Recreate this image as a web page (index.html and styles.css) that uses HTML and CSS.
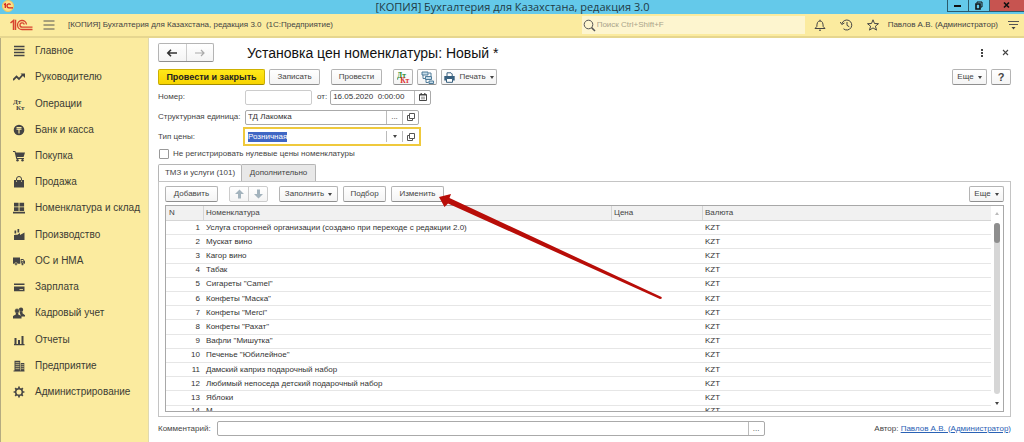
FILE: index.html
```html
<!DOCTYPE html>
<html lang="ru">
<head>
  <meta charset="UTF-8">
  <meta name="viewport" content="width=device-width, initial-scale=1.0">
  <title>[КОПИЯ] Бухгалтерия для Казахстана, редакция 3.0</title>
  <link rel="stylesheet" href="styles.css">
</head>
<body>

<div class="window">
  <div class="titlebar">
    <svg class="app-icon" width="12" height="12" viewBox="0 0 12 12">
      <circle cx="6" cy="6" r="5.5" fill="#fbe08a" stroke="#f3c95b"/>
      <path d="M2 4.6l1.3-.8V8M8.6 4.6a2 2 0 1 0-1.6 3.2h4" fill="none" stroke="#d5251d" stroke-width="1.3"/>
    </svg>
    <span class="window-title">[КОПИЯ] Бухгалтерия для Казахстана, редакция 3.0</span>
    <div class="window-buttons">
      <button aria-label="Свернуть"><svg width="9" height="9" viewBox="0 0 9 9"><path d="M1 5h7" stroke="#111" stroke-width="2"/></svg></button>
      <button aria-label="Развернуть"><svg width="9" height="9" viewBox="0 0 9 9"><path d="M3 2V1h5v5H7" fill="none" stroke="#111"/><path d="M2 3h4v5H2z" fill="none" stroke="#111" stroke-width="1.6"/></svg></button>
      <button class="close" aria-label="Закрыть"><svg width="9" height="9" viewBox="0 0 9 9"><path d="M2 1.5l5 5M7 1.5l-5 5" stroke="#111" stroke-width="1.7"/></svg></button>
    </div>
  </div>

  <header class="appbar">
    <svg class="logo" width="23" height="12" viewBox="0 0 23 12" fill="none" stroke="#d8442f">
      <path d="M.5 4L3.500 1.500V11M5.500 11V.8" stroke-width="1.500"/>
      <path d="M16.500 5.500a4.500 4.500 0 1 0-4.500 5h10.500" stroke-width="1.300"/>
      <path d="M14.300 5.500a2.200 2.200 0 1 0-2.200 2.700h10.400" stroke-width="1.300"/>
    </svg>
    <button class="icon-btn menu" aria-label="Меню"><svg width="12" height="10" viewBox="0 0 12 10"><path d="M.5 1h11M.5 5h11M.5 9h11" stroke="#555" stroke-width="1"/></svg></button>
    <span class="app-name">[КОПИЯ] Бухгалтерия для Казахстана, редакция 3.0&nbsp; (1С:Предприятие)</span>
    <label class="search">
      <svg width="13" height="13" viewBox="0 0 13 13" fill="none" stroke="#555"><circle cx="5.500" cy="5.500" r="4.300"/><path d="M8.600 8.600L12 12" stroke-width="1.500"/></svg>
      <input type="search" placeholder="Поиск Ctrl+Shift+F" aria-label="Поиск">
    </label>
    <div class="appbar-icons">
      <button class="icon-btn" aria-label="Уведомления"><svg width="12" height="12" viewBox="0 0 12 12" fill="none" stroke="#444"><path d="M1 9.500h10L9.200 7.500C9 4 8.500 2 6 2S3 4 2.800 7.500zM6 2V.7M5 11.200h2"/></svg></button>
      <button class="icon-btn" aria-label="История"><svg width="13" height="12" viewBox="0 0 13 12" fill="none" stroke="#444"><path d="M2 4.500A5 5 0 1 1 3.500 9.800M7 3v3.300l2.300 1.500"/><path d="M.3 3l1.500 2.500L4.400 4"/></svg></button>
      <button class="icon-btn" aria-label="Избранное"><svg width="12" height="12" viewBox="0 0 12 12" fill="none" stroke="#444"><path d="M6 .8l1.500 3.700 4 .2-3.100 2.500 1.100 3.900L6 8.900l-3.500 2.200 1.100-3.900L.5 4.700l4-.2z"/></svg></button>
    </div>
    <span class="user">Павлов А.В. (Администратор)</span>
    <button class="icon-btn" aria-label="Настройки"><svg width="11" height="10" viewBox="0 0 11 10"><path d="M0 1.500h11M1 4.500h9" stroke="#555"/><path d="M3.500 7h4l-2 2.500z" fill="#444"/></svg></button>
  </header>

  <div class="body">
    <nav class="sidebar">
      <a href="#"><svg width="12" height="12" viewBox="0 0 12 12"><path d="M1 1.500h10.500M1 4.500h10.500M1 7.500h10.500M1 10.500h10.500" stroke="#444" stroke-width="1.400"/></svg>Главное</a>
      <a href="#"><svg width="12" height="12" viewBox="0 0 12 12"><path d="M0 9l3.500-3.500L6 8l4-4.500" fill="none" stroke="#444" stroke-width="1.800"/><path d="M7.500 2.500H12V7z" fill="#444"/></svg>Руководителю</a>
      <a href="#"><svg class="dtkt" width="12" height="12" viewBox="0 0 12 12"><text x="0" y="6">Дт</text><text x="3" y="12">Кт</text></svg>Операции</a>
      <a href="#"><svg width="12" height="12" viewBox="0 0 12 12"><circle cx="6" cy="6" r="5.300" fill="#444"/><path d="M3.500 3.600h5M3.500 5.300h5M6 5.300V9.500" stroke="#fbeb9f" stroke-width="1.100"/></svg>Банк и касса</a>
      <a href="#"><svg width="12" height="12" viewBox="0 0 12 12"><path d="M0 1h2.300l.5 1.500H12L10.600 7H4l.3 1H11v1H3.300L1.600 2H0z" fill="#444"/><circle cx="4.500" cy="10.300" r="1.200" fill="#444"/><circle cx="9.500" cy="10.300" r="1.200" fill="#444"/></svg>Покупка</a>
      <a href="#"><svg width="12" height="12" viewBox="0 0 12 12"><path d="M1 4h10v7.500H1z" fill="#444"/><path d="M3.500 6V3a2.500 2.500 0 0 1 5 0v3" fill="none" stroke="#444"/><path d="M3.500 4.500v1.500M8.500 4.500v1.500" stroke="#fbeb9f" stroke-width=".7"/></svg>Продажа</a>
      <a href="#"><svg width="12" height="12" viewBox="0 0 12 12"><path d="M1 .8h4.600v3.700H1zM6.500.8h4.600v3.700H6.500zM1 5.300h4.600V9H1zM6.500 5.300h4.600V9H6.500zM0 9.800h12v1.700H0z" fill="#444"/></svg>Номенклатура и склад</a>
      <a href="#"><svg width="12" height="12" viewBox="0 0 12 12"><path d="M1 11V6h1l1-.5L4 6l3-2v2l4.500-2.500V11zM1.500 1.500h1.700v3H1.500zM4.500 0h1.700v3.500H4.500z" fill="#444"/></svg>Производство</a>
      <a href="#"><svg width="12" height="12" viewBox="0 0 12 12"><path d="M0 2.500h7v6.300H0zM7.600 4h2.600L12 6.200v2.600H7.600z" fill="#444"/><path d="M8.500 4.900h1.400l1 1.400H8.500z" fill="#fbeb9f"/><circle cx="3" cy="9" r="1.400" fill="#444" stroke="#fbeb9f" stroke-width=".5"/><circle cx="9.500" cy="9" r="1.400" fill="#444" stroke="#fbeb9f" stroke-width=".5"/></svg>ОС и НМА</a>
      <a href="#"><svg width="12" height="12" viewBox="0 0 12 12"><path d="M1 2.500h10.500V4H1zM1 5.500h10.500v4.700H1z" fill="#444"/><path d="M6.500 8.500h3.500" stroke="#fbeb9f" stroke-width=".8"/></svg>Зарплата</a>
      <a href="#"><svg width="12" height="12" viewBox="0 0 12 12" fill="#444"><circle cx="8" cy="2.800" r="2.200"/><path d="M6.500 5h3v1.300l2.500 2V9.500H8z"/><circle cx="4" cy="4" r="2.400" stroke="#fbeb9f" stroke-width=".4"/><path d="M2.800 6h2.500v1.400L8.500 9v2.500H0V9l2.800-1.600z"/></svg>Кадровый учет</a>
      <a href="#"><svg width="12" height="12" viewBox="0 0 12 12" fill="#444"><path d="M1 10h10.500v1.300H1zM1.500 4h2v6h-2zM5 6h2v4H5zM8.500 2h2v8h-2z"/></svg>Отчеты</a>
      <a href="#"><svg width="12" height="12" viewBox="0 0 12 12"><path d="M1.500.8h5.700V11H1.500zM7.800 3h3.500v8H7.800zM.5 10.500h11v1H.5z" fill="#444"/><path d="M2.500 2.700h4M2.500 4.700h4M2.500 6.700h4M2.500 8.700h4M8.300 4.700h2.500M8.300 6.700h2.500M8.300 8.700h2.500" stroke="#fbeb9f" stroke-width=".7"/></svg>Предприятие</a>
      <a href="#"><svg width="12" height="12" viewBox="0 0 12 12" fill="none" stroke="#444"><circle cx="6" cy="6" r="3.300" stroke-width="1.500"/><path d="M6 .6v2M6 9.400v2M.6 6h2M9.400 6h2M2.200 2.200l1.400 1.400M8.400 8.400l1.400 1.400M9.800 2.200L8.400 3.600M3.600 8.400L2.200 9.800" stroke-width="1.700"/></svg>Администрирование</a>
    </nav>

    <main class="content">
      <div class="row heading">
        <div class="btn-pair nav">
          <button aria-label="Назад"><svg width="12" height="10" viewBox="0 0 12 10"><path d="M11 5H2.500M5 1.800L1.800 5 5 8.200" fill="none" stroke="#333" stroke-width="1.600"/></svg></button>
          <button aria-label="Вперед"><svg width="12" height="10" viewBox="0 0 12 10"><path d="M1 5h9M7 2l3 3-3 3" fill="none" stroke="#aaa" stroke-width="1.200"/></svg></button>
        </div>
        <h1>Установка цен номенклатуры: Новый *</h1>
        <div class="heading-tools">
          <button class="icon-btn" aria-label="Действия"><svg width="4" height="8" viewBox="0 0 4 8" fill="#444"><path d="M1 0h2v2H1zM1 3h2v2H1zM1 6h2v2H1z"/></svg></button>
          <button class="icon-btn" aria-label="Закрыть"><svg width="7" height="7" viewBox="0 0 7 7"><path d="M1 1l5 5M6 1L1 6" stroke="#444" stroke-width="1.100"/></svg></button>
        </div>
      </div>

      <div class="row toolbar">
        <button class="btn primary">Провести и закрыть</button>
        <button class="btn w-record">Записать</button>
        <button class="btn w-record gap">Провести</button>
        <button class="btn square gap" aria-label="Проводки"><svg class="dtkt color" width="13" height="13" viewBox="0 0 12 12"><text x="0" y="6">Дт</text><text x="3" y="11">Кт</text></svg></button>
        <button class="btn square" aria-label="Структура"><svg width="13" height="13" viewBox="0 0 13 13" fill="#c5dbe8" stroke="#3f7191" stroke-width=".9"><path d="M1 1h6v3H1zM4.500 5.500h6v3h-6zM8 10h4.500v2.500H8z"/><path d="M2 4v3.500h2M5 8.500v3h2.500M7.500 2H10v3" fill="none"/></svg></button>
        <button class="btn print"><svg width="11" height="11" viewBox="0 0 11 11"><path d="M3 4V.8h4l1.200 1.200V4" fill="#fff" stroke="#38607f"/><path d="M.3 4h10.400v4.500H.3z" fill="#38607f"/><path d="M2.500 6.500h6v3.800h-6z" fill="#fff" stroke="#38607f"/></svg>Печать<i class="caret"></i></button>
        <button class="btn more push">Еще<i class="caret"></i></button>
        <button class="btn square help">?</button>
      </div>

      <div class="row field">
        <label for="number">Номер:</label>
        <input class="box number" type="text" id="number">
        <label class="from" for="date">от:</label>
        <div class="box date">
          <input type="text" id="date" value="16.05.2020  0:00:00">
          <button aria-label="Календарь"><svg width="8" height="8" viewBox="0 0 8 8"><path d="M.5 1.500h7v6h-7z" fill="none" stroke="#444"/><path d="M.5 2h7M2.200 0v2M5.800 0v2" stroke="#444" stroke-width="1.200"/><path d="M2 4.200h4M2 5.800h4" stroke="#777" stroke-width=".8"/></svg></button>
        </div>
      </div>
      <div class="row field">
        <label for="unit">Структурная единица:</label>
        <div class="box ref">
          <input type="text" id="unit" value="ТД Лакомка">
          <button aria-label="Выбрать">...</button>
          <button aria-label="Открыть"><svg width="8" height="8" viewBox="0 0 8 8" fill="none" stroke="#555"><path d="M2.500.5h5v5h-5z"/><path d="M2.500 2.500h-2v5h5v-2"/></svg></button>
        </div>
      </div>
      <div class="row field price">
        <label for="price-type">Тип цены:</label>
        <div class="box ref active">
          <input type="text" id="price-type" role="combobox" value="Розничная">
          <button aria-label="Список"><i class="caret"></i></button>
          <button aria-label="Открыть"><svg width="8" height="8" viewBox="0 0 8 8" fill="none" stroke="#555"><path d="M2.500.5h5v5h-5z"/><path d="M2.500 2.500h-2v5h5v-2"/></svg></button>
        </div>
      </div>
      <label class="row check"><input type="checkbox">Не регистрировать нулевые цены номенклатуры</label>

      <div class="tabs" role="tablist">
        <button class="tab selected" role="tab" aria-selected="true">ТМЗ и услуги (101)</button>
        <button class="tab" role="tab" aria-selected="false">Дополнительно</button>
      </div>

      <section class="panel">
        <div class="row panel-tools">
          <button class="btn w-add">Добавить</button>
          <div class="btn-pair move gap">
            <button aria-label="Вверх"><svg width="9" height="10" viewBox="0 0 9 10"><path d="M4.500.5L9 5H6v4.500H3V5H0z" fill="#a3b3bd"/></svg></button>
            <button aria-label="Вниз"><svg width="9" height="10" viewBox="0 0 9 10"><path d="M4.500 9.500L0 5h3V.5h3V5h3z" fill="#a3b3bd"/></svg></button>
          </div>
          <button class="btn w-fill gap">Заполнить<i class="caret"></i></button>
          <button class="btn w-pick">Подбор</button>
          <button class="btn w-add">Изменить</button>
          <button class="btn more push">Еще<i class="caret"></i></button>
        </div>
        <div class="grid">
          <div class="grid-view">
            <table>
              <thead>
                <tr><th class="col-n">N</th><th>Номенклатура</th><th class="col-price">Цена</th><th class="col-currency">Валюта</th></tr>
              </thead>
              <tbody>
                <tr><td>1</td><td>Услуга сторонней организации (создано при переходе с редакции 2.0)</td><td></td><td>KZT</td></tr>
                <tr><td>2</td><td>Мускат вино</td><td></td><td>KZT</td></tr>
                <tr><td>3</td><td>Кагор вино</td><td></td><td>KZT</td></tr>
                <tr><td>4</td><td>Табак</td><td></td><td>KZT</td></tr>
                <tr><td>5</td><td>Сигареты "Camel"</td><td></td><td>KZT</td></tr>
                <tr><td>6</td><td>Конфеты "Маска"</td><td></td><td>KZT</td></tr>
                <tr><td>7</td><td>Конфеты "Merci"</td><td></td><td>KZT</td></tr>
                <tr><td>8</td><td>Конфеты "Рахат"</td><td></td><td>KZT</td></tr>
                <tr><td>9</td><td>Вафли "Мишутка"</td><td></td><td>KZT</td></tr>
                <tr><td>10</td><td>Печенье "Юбилейное"</td><td></td><td>KZT</td></tr>
                <tr><td>11</td><td>Дамский каприз подарочный набор</td><td></td><td>KZT</td></tr>
                <tr><td>12</td><td>Любимый непоседа детский подарочный набор</td><td></td><td>KZT</td></tr>
                <tr><td>13</td><td>Яблоки</td><td></td><td>KZT</td></tr>
                <tr class="last"><td>14</td><td>М...</td><td></td><td>KZT</td></tr>
              </tbody>
            </table>
          </div>
          <div class="scrollbar">
            <i class="caret up"></i>
            <div class="track"><div class="thumb"></div></div>
            <i class="caret"></i>
          </div>
        </div>
      </section>

      <footer class="row footer">
        <label for="comment">Комментарий:</label>
        <div class="box comment">
          <input type="text" id="comment">
          <button aria-label="Открыть комментарий">...</button>
        </div>
        <span class="author">Автор: <a href="#">Павлов А.В. (Администратор)</a></span>
      </footer>
    </main>
  </div>

  <svg class="pointer" width="226" height="108" viewBox="0 0 226 108"><path d="M1 3L13 0l-1.500 4L223.500 103q1 2-1.500 2L10 9.500 6.500 13z" fill="#b80d08"/></svg>
</div>

<script>
  document.getElementById('price-type').select();
</script>
</body>
</html>
```
FILE: styles.css
```css
* {
  box-sizing: border-box;
}

body {
  margin: 0;
  font-family: "Liberation Sans", Arial, sans-serif;
  font-size: 8px;
  line-height: 10px;
  color: #444;
  background: #fff;
}

button,
input {
  font: inherit;
  color: inherit;
  margin: 0;
  padding: 0;
  border: none;
  background: none;
}

input {
  outline: none;
  min-width: 0;
}

svg {
  display: block;
  flex: none;
}

.window {
  position: relative;
  display: flex;
  flex-direction: column;
  height: 100vh;
  overflow: hidden;
}

/* window frame */
.titlebar {
  display: flex;
  justify-content: space-between;
  height: 14px;
  padding-left: 2px;
  background: #64c9ea;
}

.window-title {
  font-family: "Open Sans", sans-serif;
  font-size: 11px;
  line-height: 13px;
  color: #1f3a45;
  margin-left: 64px;
}

.window-buttons {
  display: flex;
  height: 12px;
}

.window-buttons button {
  width: 21px;
  display: flex;
  align-items: center;
  justify-content: center;
  border: 1px solid #2b5b6c;
  border-top: none;
  border-right: none;
}

.window-buttons .close {
  width: 35px;
  background: #c75450;
}

.appbar {
  display: flex;
  align-items: center;
  height: 24px;
  padding: 0 5px 0 10px;
  background: #fbeb9f;
  border-bottom: 2px solid #e6d68f;
}

.icon-btn {
  display: flex;
}

.menu {
  margin: 0 13px 0 10px;
}

.app-name {
  flex: 1;
}

.search {
  display: flex;
  align-items: center;
  gap: 1px;
  width: 223px;
  height: 18px;
  padding-left: 1px;
  background: #fdf5cf;
}

.search input {
  flex: 1;
}

.search input::placeholder {
  color: #aaa48a;
  opacity: 1;
}

.appbar-icons {
  display: flex;
  gap: 14px;
  margin: 0 9px;
}

.user {
  margin-right: 10px;
}

.body {
  display: flex;
  flex: 1;
  min-height: 0;
}

.sidebar {
  display: flex;
  flex-direction: column;
  width: 149px;
  flex: none;
  padding-bottom: 37px;
  background: #fbeb9f;
  border-left: 1px solid #b5ab80;
  border-right: 1px solid #e0d9b0;
}

.sidebar a {
  flex: 1;
  display: flex;
  align-items: center;
  gap: 10px;
  padding-left: 12px;
  font-size: 10px;
  color: #3c3c34;
  text-decoration: none;
}

.dtkt text {
  font-family: "Liberation Serif", serif;
  font-size: 7px;
  font-weight: bold;
  fill: #444;
}

.dtkt.color text {
  fill: #2c8a2c;
}

.dtkt.color text + text {
  fill: #d33;
}

/* document form */
.content {
  flex: 1;
  min-width: 0;
  display: flex;
  flex-direction: column;
  padding: 5px 13px 6px 9px;
}

.row {
  display: flex;
  align-items: center;
}

.btn-pair,
.btn {
  border: 1px solid #b4b4b4;
  border-bottom-color: #8f8f8f;
  border-radius: 2px;
  background: linear-gradient(#fff, #f4f4f4);
}

.btn-pair {
  display: flex;
}

.btn-pair button {
  display: flex;
  align-items: center;
  justify-content: center;
  flex: 1;
}

.btn-pair button + button {
  border-left: 1px solid #ccc;
}

.nav {
  width: 56px;
  height: 19px;
}

h1 {
  margin: 0 0 0 33px;
  font-size: 14px;
  line-height: 18px;
  font-weight: normal;
  color: #111;
}

.heading-tools {
  display: flex;
  align-items: center;
  gap: 18px;
  margin-left: auto;
  padding-right: 2px;
}

.toolbar {
  gap: 4px;
  margin-top: 7px;
}

.btn {
  display: flex;
  align-items: center;
  justify-content: center;
  gap: 4px;
  height: 16px;
}

.gap {
  margin-left: 7px;
}

.push {
  margin-left: auto;
}

.primary {
  width: 107px;
  font-size: 9px;
  font-weight: bold;
  color: #222;
  background: linear-gradient(#ffe81a, #f8d400);
  border-color: #cdb000;
  border-bottom-color: #a18b00;
}

.w-record {
  width: 51px;
}

.square {
  width: 20px;
}

.print {
  width: 56px;
}

.more {
  width: 35px;
}

.help {
  font-size: 11px;
  font-weight: bold;
}

.w-add {
  width: 53px;
}

.w-fill {
  width: 59px;
}

.w-pick {
  width: 43px;
}

.caret {
  border: 2px solid transparent;
  border-top: 3px solid #444;
  border-bottom: none;
}

.caret.up {
  border-top: none;
  border-bottom: 3px solid #bbb;
}

.field {
  margin-top: 4px;
  height: 16px;
}

.field label:first-child {
  width: 87px;
}

.box {
  display: flex;
  height: 15px;
  border: 1px solid #aaa;
  border-radius: 2px;
  background: #fff;
}

.box input {
  flex: 1;
  padding-left: 2px;
  color: #333;
  white-space: pre;
}

.box button {
  display: flex;
  align-items: center;
  justify-content: center;
  width: 16px;
  border-left: 1px solid #bbb;
}

.number {
  width: 67px;
  border-color: #ccc;
}

.field .from {
  margin: 0 3px 0 5px;
}

.date {
  width: 101px;
}

.ref {
  width: 174px;
}

.price {
  margin-top: 2px;
  height: 19px;
}

.active {
  width: 178px;
  height: 19px;
  margin-left: -2px;
  padding: 2px 1px;
  border: 2px solid #efc93c;
  border-radius: 0;
}

.active ::selection {
  color: #fff;
  background: #3f66c4;
}

.check {
  margin-top: 3px;
  height: 10px;
  gap: 4px;
}

.check input {
  appearance: none;
  width: 10px;
  height: 10px;
  margin-left: 1px;
  border: 1px solid #999;
  border-radius: 1px;
}

.tabs {
  display: flex;
  margin-top: 5px;
}

.tab {
  height: 17px;
  width: 74px;
  border: 1px solid #b5b5b5;
  border-left: none;
  border-bottom: none;
  border-radius: 0 2px 0 0;
  background: #e8e8e8;
}

.tab.selected {
  width: 84px;
  margin-bottom: -1px;
  border-left: 1px solid #b5b5b5;
  border-radius: 2px 2px 0 0;
  background: #fff;
  z-index: 1;
}

.panel {
  flex: 1;
  min-height: 0;
  display: flex;
  flex-direction: column;
  padding: 4px 6px;
  border: 1px solid #c4c4c4;
}

.panel-tools {
  gap: 5px;
}

.move {
  width: 39px;
  height: 16px;
  border-color: #ccc;
}

.panel-tools .gap {
  margin-left: 6px;
}

.grid {
  flex: 1;
  min-height: 0;
  display: flex;
  margin-top: 3px;
  border: 1px solid #a8a8a8;
}

.grid-view {
  flex: 1;
  overflow: hidden;
}

table {
  width: 100%;
  height: 214px;
  table-layout: fixed;
  border-collapse: separate;
  border-spacing: 0;
}

th {
  height: 15px;
  padding: 0 3px;
  text-align: left;
  font-weight: normal;
  background: #f1f1f1;
  border-bottom: 1px solid #d5d5d5;
}

th + th {
  padding-left: 2px;
  border-left: 1px solid #d5d5d5;
}

td {
  padding: 0 3px;
  color: #333;
  border-bottom: 1px solid #e6e6e6;
}

.last td {
  vertical-align: top;
}

td:first-child {
  text-align: right;
}

.col-n {
  width: 37px;
}

.col-price {
  width: 91px;
}

.col-currency {
  width: 289px;
}

.scrollbar {
  display: flex;
  flex-direction: column;
  align-items: center;
  width: 12px;
  padding: 6px 0;
  gap: 8px;
}

.track {
  flex: 1;
  width: 6px;
  border-radius: 3px;
  background: #d6d6d6;
}

.thumb {
  height: 20px;
  border-radius: 3px;
  background: #8e8e8e;
}

.footer {
  margin-top: 4px;
}

.comment {
  flex: 1;
  max-width: 548px;
  margin-left: 6px;
}

.author {
  margin-left: auto;
}

.author a {
  color: #2a62b5;
}

/* hint arrow over the form */
.pointer {
  position: absolute;
  left: 438px;
  top: 194px;
  z-index: 2;
  pointer-events: none;
}
```
